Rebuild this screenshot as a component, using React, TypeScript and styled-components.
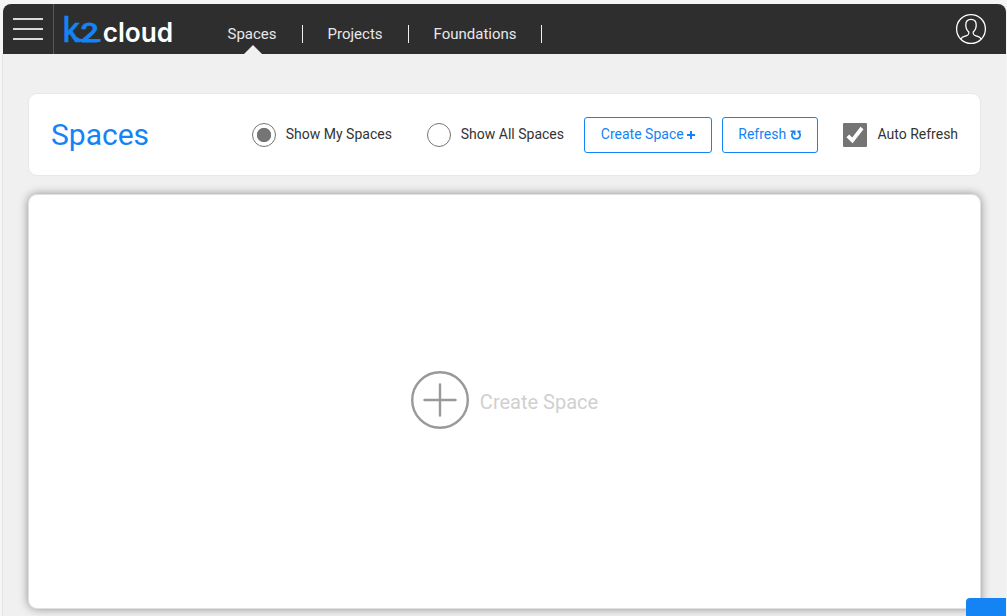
import React from 'react';
import styled, { createGlobalStyle } from 'styled-components';

const GlobalStyle = createGlobalStyle`
  * { box-sizing: border-box; }
  html, body { margin: 0; padding: 0; }
  body {
    background: #f5f5f5;
    font-family: Roboto, "Liberation Sans", sans-serif;
    overflow: hidden;
  }
`;

const Frame = styled.div`
  position: relative;
  width: 1007px;
  height: 616px;
  padding: 4px 1px 0 2px;
  display: flex;
  flex-direction: column;
  overflow: hidden;
`;

const Header = styled.header`
  height: 50px;
  flex: none;
  margin-left: 1px;
  display: flex;
  background: #2e2e2e;
  border-radius: 8px 8px 0 0;
`;

const MenuButton = styled.button`
  width: 51px;
  padding: 0 10px;
  border: 0;
  border-right: 1px solid #595959;
  background: none;
  display: flex;
  flex-direction: column;
  justify-content: center;
  gap: 8px;
`;

const MenuLine = styled.span`
  height: 2px;
  width: 30px;
  background: #d9d9d9;
`;

const Logo = styled.svg`
  display: block;
  width: 120px;
  height: 50px;
  flex: none;
`;

const Nav = styled.nav`
  display: flex;
  margin-left: 28.5px;
  flex: 1;
`;

const NavItem = styled.a<{ $active?: boolean }>`
  position: relative;
  height: 50px;
  padding: 0 25px;
  line-height: 60px;
  font-size: 15px;
  color: #e8e8e8;

  &::after {
    content: '';
    position: absolute;
    right: -1px;
    top: 21px;
    width: 1px;
    height: 18px;
    background: #f0f0f0;
  }

  &::before {
    content: '';
    display: ${(p) => (p.$active ? 'block' : 'none')};
    position: absolute;
    left: calc(50% - 8px);
    bottom: 0;
    border: 9px solid transparent;
    border-top-width: 0;
    border-bottom-color: #f0f0f0;
  }
  & + & { margin-left: 1px; }
  &:last-child { padding-right: 24.5px; }
`;

const Avatar = styled.svg`
  width: 32px;
  height: 32px;
  margin: 9px 19px 0 0;
`;

const Main = styled.main`
  flex: 1;
  padding: 39px 25px 7px;
  display: flex;
  flex-direction: column;
  gap: 18px;
  background: #f0f0f0;
  border-left: 1px solid #e4e4e4;
`;

const Toolbar = styled.section`
  height: 83px;
  flex: none;
  display: flex;
  align-items: center;
  padding: 0 22px;
  background: #fff;
  border: 1px solid #e8e8e8;
  border-radius: 9px;
`;

const Title = styled.h1`
  margin: 0;
  width: 201px;
  font-size: 30px;
  font-weight: 400;
  line-height: 36px;
  color: #1483f3;
`;

const Option = styled.label<{ $width: number; $inset?: number }>`
  display: flex;
  align-items: center;
  width: ${(p) => p.$width}px;
  padding-left: ${(p) => p.$inset ?? 0}px;
  gap: ${(p) => (p.$inset ? 10.5 : 9.8)}px;
  font-size: 14px;
  font-weight: 400;
  line-height: 24px;
  color: #333;
  white-space: nowrap;
`;

const OptionText = styled.span`
  padding-bottom: 2px;
`;

const Radio = styled.span<{ $checked?: boolean }>`
  width: 24px;
  height: 24px;
  flex: none;
  border: 1px solid #757575;
  border-radius: 50%;
  background: ${(p) =>
    p.$checked ? 'radial-gradient(circle, #757575 6.8px, #fff 7.5px)' : '#fff'};
`;

const CheckBox = styled.svg`
  width: 24px;
  height: 24px;
  flex: none;
  background: #757575;
  border-radius: 1px;
`;

const Button = styled.button<{ $width: number }>`
  width: ${(p) => p.$width}px;
  height: 36px;
  margin-right: 10px;
  padding: 0 0 2px;
  display: flex;
  align-items: center;
  justify-content: center;
  gap: 3.5px;
  border: 1px solid #1483f3;
  border-radius: 3px;
  background: #fff;
  color: #1483f3;
  font: 400 14px Roboto, "Liberation Sans", sans-serif;
  white-space: nowrap;
`;

const ButtonIcon = styled.svg`
  flex: none;
  margin-top: 2px;
`;

const Canvas = styled.section`
  flex: 1;
  display: flex;
  align-items: center;
  justify-content: center;
  gap: 11px;
  background: #fff;
  border: 1px solid #e0e0e0;
  border-radius: 9px;
  box-shadow: 0 0 10px rgba(0, 0, 0, 0.4);
`;

const PlusCircle = styled.svg`
  width: 58px;
  height: 58px;
  margin-top: -3px;
`;

const EmptyText = styled.span`
  font-size: 20px;
  line-height: 24px;
  color: #d0d0d0;
`;

const ChatTab = styled.div`
  position: absolute;
  left: 966px;
  bottom: 0;
  width: 40px;
  height: 18px;
  background: #1483f3;
  border-radius: 4px 0 0 0;
`;

export default function App() {
  return (
    <>
      <GlobalStyle />
      <Frame>
        <Header>
          <MenuButton aria-label="Menu">
            <MenuLine />
            <MenuLine />
            <MenuLine />
          </MenuButton>
          <Logo viewBox="0 0 120 50">
            <g fill="#1483f3" stroke="#1483f3" strokeWidth="0.5" fontFamily="Inter" fontWeight="500">
              <text x="8.4" y="38" fontSize="35" textLength="17.6" lengthAdjust="spacingAndGlyphs">k</text>
              <text x="26" y="38" fontSize="25" strokeWidth="0.9" textLength="19" lengthAdjust="spacingAndGlyphs">2</text>
            </g>
            <path d="M22 34 Q24 36.5 28 36.5 H46.5" fill="none" stroke="#1483f3" strokeWidth="3" />
            <text x="48.7" y="38" fill="#fff" fontFamily="Inter" fontWeight="600" fontSize="27" textLength="70.5" lengthAdjust="spacingAndGlyphs">cloud</text>
          </Logo>
          <Nav>
            <NavItem $active>Spaces</NavItem>
            <NavItem>Projects</NavItem>
            <NavItem>Foundations</NavItem>
          </Nav>
          <Avatar viewBox="0 0 32 32" fill="none" stroke="#fff" strokeWidth="1.3">
            <circle cx="16" cy="16" r="14.4" />
            <path d="M5.8 26 C7 23.8 9 23.5 11 22.8 C13.5 22 14 21.5 13.8 19 C11.5 17.2 10.8 14.5 10.8 12 C10.8 8.5 12.8 6.3 16 6.3 S21.2 8.5 21.2 12 C21.2 14.5 20.5 17.2 18.2 19 C18 21.5 18.5 22 21 22.8 C23 23.5 25 23.8 26.2 26" />
          </Avatar>
        </Header>
        <Main>
          <Toolbar>
            <Title>Spaces</Title>
            <Option $width={175}>
              <Radio $checked />
              <OptionText>Show My Spaces</OptionText>
            </Option>
            <Option $width={157}>
              <Radio />
              <OptionText>Show All Spaces</OptionText>
            </Option>
            <Button $width={128}>
              Create Space
              <ButtonIcon width="8" height="8" viewBox="0 0 8 8" stroke="#1483f3" strokeWidth="2">
                <path d="M4 0V8M0 4H8" />
              </ButtonIcon>
            </Button>
            <Button $width={96}>
              Refresh
              <ButtonIcon width="12" height="10" viewBox="0 0 12 10" fill="none" stroke="#1483f3" strokeWidth="1.6">
                <path d="M0.5 1.2H4.7V5" />
                <path d="M4.2 1.6C0.4 3.6 1.4 8.8 6 8.8C10.8 8.8 11.6 3.4 7.6 1.3H10.6" />
              </ButtonIcon>
            </Button>
            <Option $width={130} $inset={15}>
              <CheckBox viewBox="0 0 24 24" fill="none" stroke="#fff" strokeWidth="3.8">
                <path d="M4.8 12.8L9.4 17.4L19 5" />
              </CheckBox>
              <OptionText>Auto Refresh</OptionText>
            </Option>
          </Toolbar>
          <Canvas>
            <PlusCircle viewBox="0 0 58 58" fill="none" stroke="#999" strokeWidth="2.4" strokeLinecap="round">
              <circle cx="29" cy="29" r="27.8" />
              <path d="M29 13.5V44.5M13.5 29H44.5" />
            </PlusCircle>
            <EmptyText>Create Space</EmptyText>
          </Canvas>
        </Main>
        <ChatTab />
      </Frame>
    </>
  );
}
